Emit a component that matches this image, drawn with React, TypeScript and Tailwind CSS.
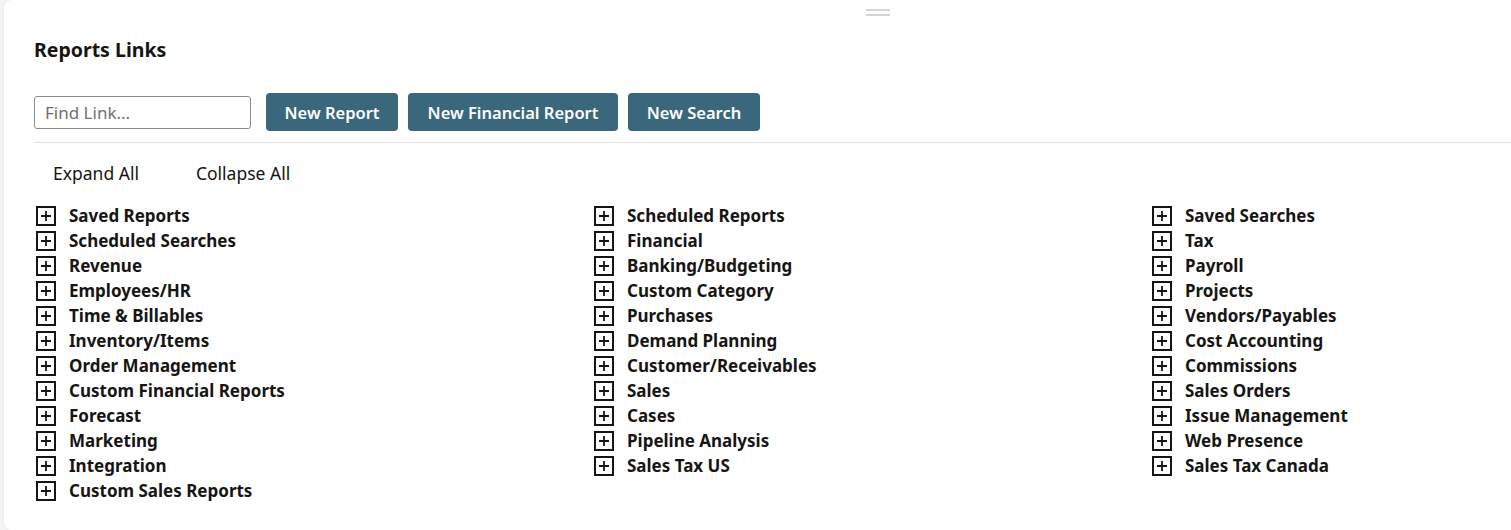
import { useState } from 'react'

const COLUMNS: string[][] = [
  [
    'Saved Reports',
    'Scheduled Searches',
    'Revenue',
    'Employees/HR',
    'Time & Billables',
    'Inventory/Items',
    'Order Management',
    'Custom Financial Reports',
    'Forecast',
    'Marketing',
    'Integration',
    'Custom Sales Reports',
  ],
  [
    'Scheduled Reports',
    'Financial',
    'Banking/Budgeting',
    'Custom Category',
    'Purchases',
    'Demand Planning',
    'Customer/Receivables',
    'Sales',
    'Cases',
    'Pipeline Analysis',
    'Sales Tax US',
  ],
  [
    'Saved Searches',
    'Tax',
    'Payroll',
    'Projects',
    'Vendors/Payables',
    'Cost Accounting',
    'Commissions',
    'Sales Orders',
    'Issue Management',
    'Web Presence',
    'Sales Tax Canada',
  ],
]

function PlusBox() {
  return (
    <span className="flex h-[20px] w-[20px] shrink-0 items-center justify-center border-2 border-[#161513] bg-white">
      <svg width="12" height="12" viewBox="0 0 12 12">
        <path d="M6 1v10M1 6h10" stroke="#161513" strokeWidth="1.8" />
      </svg>
    </span>
  )
}

export default function App() {
  const [query, setQuery] = useState('')

  return (
    <div
      className="h-[530px] overflow-hidden bg-[#f4f4f3] pl-[4px] text-[#161513]"
      style={{ fontFamily: '"Noto Sans", "Open Sans", sans-serif' }}
    >
      <div className="relative h-[530px] rounded-l-[8px] bg-white pl-[30px] shadow-[0_0_2px_rgba(0,0,0,0.08)]">
        <div className="absolute left-[862px] top-[9px] flex w-[24px] flex-col gap-[3px]">
          <div className="h-[2px] bg-[#d6d6d6]" />
          <div className="h-[2px] bg-[#d6d6d6]" />
        </div>

        <h1 className="pt-[36px] text-[19.5px] font-bold leading-[28px]">Reports Links</h1>

        <div className="mt-[29px] flex items-center gap-[10px] border-b border-[#e3e3e3] pb-[11px]">
          <input
            value={query}
            onChange={(e) => setQuery(e.currentTarget.value)}
            placeholder="Find Link..."
            className="mr-[5px] h-[33px] w-[217px] rounded-[3px] border border-[#8c8c8c] px-[10px] pt-[1px] text-[17px] text-[#161513] outline-none placeholder:text-[#6f6f6f]"
          />
          <button className="h-[38px] w-[132px] rounded-[4px] bg-[#3a677b] pt-[3px] text-[16.5px] font-semibold text-white">
            New Report
          </button>
          <button className="h-[38px] w-[210px] rounded-[4px] bg-[#3a677b] pt-[3px] text-[16.5px] font-semibold text-white">
            New Financial Report
          </button>
          <button className="h-[38px] w-[132px] rounded-[4px] bg-[#3a677b] pt-[3px] text-[16.5px] font-semibold text-white">
            New Search
          </button>
        </div>

        <div className="mt-[18px] flex gap-[57px] pl-[19px] text-[17.5px] leading-[24px]">
          <button>Expand All</button>
          <button>Collapse All</button>
        </div>

        <div className="mt-[18px] grid grid-cols-[558px_558px_1fr] pl-[2px]">
          {COLUMNS.map((col, i) => (
            <ul key={i} className="flex flex-col">
              {col.map((label) => (
                <li key={label} className="flex h-[25px] items-center gap-[13px]">
                  <PlusBox />
                  <span className="text-[17px] font-bold leading-[25px]">{label}</span>
                </li>
              ))}
            </ul>
          ))}
        </div>
      </div>
    </div>
  )
}
